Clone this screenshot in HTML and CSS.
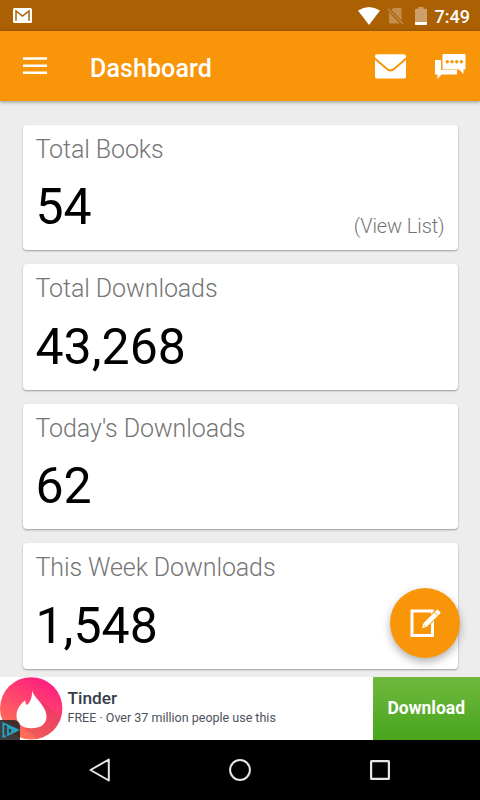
FILE: index.html
```html
<!DOCTYPE html>
<html lang="en">
<head>
    <meta charset="UTF-8">
    <meta name="viewport" content="width=device-width, initial-scale=1.0">
    <title>Dashboard</title>
    <link rel="stylesheet" href="styles.css">
</head>
<body>
    <div class="status-bar">
        <svg class="gmail" width="19" height="15" viewBox="0 0 19 15">
            <rect width="19" height="15" rx="1.5" fill="#fff"/>
            <path d="M3 12.8V3l6.5 5L16 3v9.8" fill="none" stroke="#ab6103" stroke-width="1.5"/>
        </svg>
        <svg class="wifi" width="22" height="18" viewBox="0 0 22 18">
            <path d="M0 3.6Q11-3.6 22 3.6L11 18z" fill="#fff"/>
        </svg>
        <svg class="no-sim" width="17" height="18" viewBox="0 0 17 18">
            <path d="M6 1h7.500q1 0 1 1v11.600L4.500 3zM2 5.200L12.800 16.500H3.500Q2 16.500 2 15z" fill="#c48e4e"/>
            <path d="M.6 1.600L16 17" stroke="#c48e4e" stroke-width="1.200"/>
        </svg>
        <svg class="battery" width="12" height="18" viewBox="0 0 12 18">
            <path d="M3.500 0h5v1.800H11q1 0 1 1V15H0V2.800q0-1 1-1h2.500z" fill="#cda069"/>
            <path d="M0 15h12v2.200q0 .8-.8.800H.8q-.8 0-.8-.8z" fill="#fff"/>
        </svg>
        <span class="clock">7:49</span>
    </div>

    <header>
        <svg class="menu" width="24" height="18" viewBox="0 0 24 18">
            <path d="M0 1.500h24M0 8.800h24M0 15.800h24" stroke="#fff" stroke-width="2.600"/>
        </svg>
        <h1>Dashboard</h1>
        <svg class="mail" width="31" height="25" viewBox="0 0 31 25">
            <rect y=".3" width="31" height="24.300" rx="2" fill="#fff"/>
            <path d="M-.5 4.200L12 14.900q3.500 3 7 0L31.500 4.200" fill="none" stroke="#f99508" stroke-width="2"/>
        </svg>
        <svg class="chat" width="31" height="25" viewBox="0 0 31 25">
            <path d="M0 6h6v10h16v4.500H6.500L2.500 25v-4.500H0z" fill="#fff"/>
            <path d="M7.500 0H30.500v15.500h-2V20L24 15.500H7.500z" fill="#fff"/>
            <g fill="#f99508">
                <circle cx="12.300" cy="7.700" r="1.700"/>
                <circle cx="17" cy="7.700" r="1.700"/>
                <circle cx="21.700" cy="7.700" r="1.700"/>
                <circle cx="26.400" cy="7.700" r="1.700"/>
            </g>
        </svg>
    </header>

    <main>
        <section class="card">
            <h2>Total Books</h2>
            <p class="number">54</p>
            <a class="view-list">(View List)</a>
        </section>
        <section class="card">
            <h2>Total Downloads</h2>
            <p class="number">43,268</p>
        </section>
        <section class="card">
            <h2>Today's Downloads</h2>
            <p class="number">62</p>
        </section>
        <section class="card">
            <h2>This Week Downloads</h2>
            <p class="number">1,548</p>
        </section>

        <button class="fab" type="button" aria-label="Edit">
            <svg width="31" height="30" viewBox="0 0 31 30">
                <rect x="2" y="3" width="20.500" height="24.500" fill="none" stroke="#fff" stroke-width="3"/>
                <path d="M12 20.200l1.600-5.200L26.800 1.900q.7-.6 1.400.1l2 2q.7.700 0 1.400L17 18.400z" fill="#fff" stroke="#f99508" stroke-width="2" paint-order="stroke"/>
                <path d="M24.500 4.200l3.300 3.300M14 17l1.200 1.200" stroke="#f99508" stroke-width=".9"/>
            </svg>
        </button>
    </main>

    <div class="ad">
        <div class="ad-logo">
            <svg width="63" height="63" viewBox="0 0 63 63">
                <defs>
                    <linearGradient id="pink" x1=".75" y1=".05" x2=".25" y2=".95">
                        <stop offset="0" stop-color="#ff1e80"/>
                        <stop offset="1" stop-color="#ff7456"/>
                    </linearGradient>
                    <clipPath id="round"><circle cx="31.200" cy="31.400" r="31.200"/></clipPath>
                </defs>
                <circle cx="31.200" cy="31.400" r="31.200" fill="url(#pink)"/>
                <path d="M44 25L63 43V63H38L20 47z" fill="#a83240" opacity=".2" clip-path="url(#round)"/>
                <path d="M32 12.500c.5 5.500 6 9.500 10 15.500 2.500 3.600 4.500 7.200 4.500 11.500 0 8-6.500 11.800-15.200 11.800S16.500 46.500 16.500 39c0-6.500 3.500-12 8.800-15.800-.1 2 .3 3.800 1.500 4.900 4-3.300 5.700-9 5.200-15.600z" fill="#fff"/>
            </svg>
            <span class="ad-choices">
                <svg width="17" height="16" viewBox="0 0 17 16">
                    <path d="M4 14l-2.700.8V1.400L15.800 8 6 12.800V5l6 3-3 1.500" fill="none" stroke="#20a5c5" stroke-width="1.800"/>
                </svg>
            </span>
        </div>
        <div class="ad-text">
            <h3>Tinder</h3>
            <p>FREE · Over 37 million people use this</p>
        </div>
        <button class="download" type="button">Download</button>
    </div>

    <nav>
        <svg width="24" height="26" viewBox="0 0 24 26">
            <path d="M20.800 2.500v21L2.500 13z" fill="none" stroke="#e6e6e6" stroke-width="2" stroke-linejoin="round"/>
        </svg>
        <svg width="24" height="24" viewBox="0 0 24 24">
            <circle cx="12" cy="12" r="9.900" fill="none" stroke="#e6e6e6" stroke-width="2"/>
        </svg>
        <svg width="24" height="24" viewBox="0 0 24 24">
            <rect x="3.100" y="3.100" width="17.800" height="17.800" rx=".5" fill="none" stroke="#e6e6e6" stroke-width="2.200"/>
        </svg>
    </nav>
</body>
</html>
```
FILE: styles.css
```css
/* General */
* {
    box-sizing: border-box;
}

body {
    display: flex;
    flex-direction: column;
    width: 480px;
    height: 800px;
    margin: 0;
    overflow: hidden;
    font-family: Roboto, sans-serif;
    background-color: #ededed;
}

h1, h2, h3, p {
    margin: 0;
}

svg {
    display: block;
    flex: none;
}

button {
    border: none;
    padding: 0;
    font-family: inherit;
}

/* Status bar */
.status-bar {
    display: flex;
    align-items: center;
    height: 31px;
    padding: 0 10px 0 13px;
    background-color: #ab6103;
    color: #fff;
}

.wifi {
    margin-left: auto;
}

.no-sim {
    margin-left: 7px;
}

.battery {
    margin-left: 11px;
}

.clock {
    margin-left: 8px;
    font-size: 18px;
    font-weight: 500;
    line-height: 31px;
    padding-top: 1px;
}

/* Toolbar */
header {
    position: relative;
    display: flex;
    align-items: center;
    height: 70px;
    padding: 0 14px 0 23px;
    background-color: #f99508;
    color: #fff;
    box-shadow: 0 1px 4px rgba(0, 0, 0, 0.4);
}

h1 {
    margin-left: 43px;
    padding-top: 4px;
    font-size: 25px;
    font-weight: 500;
    letter-spacing: 0.1px;
}

.mail {
    margin-left: auto;
}

.chat {
    margin-left: 29px;
}

/* Cards */
main {
    position: relative;
    display: flex;
    flex-direction: column;
    gap: 14px;
    height: 576px;
    padding: 23.7px 22.5px 0;
}

.card {
    display: grid;
    grid-template-columns: 1fr auto;
    grid-template-rows: 50.7px 1fr;
    flex: none;
    height: 125.5px;
    padding: 0 13px;
    background-color: #fff;
    border-radius: 4px;
    box-shadow: 0 1px 2px rgba(0, 0, 0, 0.35);
}

.card h2 {
    grid-column: 1 / 3;
    font-size: 25px;
    font-weight: 300;
    line-height: 50px;
    letter-spacing: -0.1px;
    color: #757575;
}

.number {
    font-size: 50px;
    line-height: 64px;
    color: #000;
}

.view-list {
    align-self: end;
    padding-bottom: 12px;
    font-size: 20px;
    font-weight: 300;
    line-height: 24px;
    letter-spacing: -0.1px;
    color: #757575;
}

/* Floating edit button */
.fab {
    position: absolute;
    right: 20px;
    bottom: 19.5px;
    display: flex;
    align-items: center;
    justify-content: center;
    width: 70px;
    height: 70px;
    border-radius: 50%;
    background-color: #f99508;
    box-shadow: 0 4px 8px rgba(0, 0, 0, 0.3);
}

/* Ad banner */
.ad {
    display: flex;
    height: 63px;
    background-color: #fff;
}

.ad-logo {
    position: relative;
    width: 63px;
}

.ad-choices {
    position: absolute;
    left: 0;
    bottom: 0;
    display: flex;
    align-items: center;
    justify-content: center;
    width: 20px;
    height: 20px;
    border-top-right-radius: 6px;
    background-color: rgba(45, 40, 40, 0.9);
}

.ad-text {
    flex: 1;
    padding: 10px 0 0 4.5px;
    color: #353d49;
}

.ad-text h3 {
    font-size: 17.3px;
    font-weight: 500;
    line-height: 22px;
}

.ad-text p {
    font-size: 12.5px;
    line-height: 18px;
    color: #4c525c;
}

.download {
    width: 107.5px;
    padding-bottom: 2px;
    background: linear-gradient(#70b93f, #48a51d);
    color: #fff;
    font-size: 17.5px;
    font-weight: 700;
}

/* Navigation bar */
nav {
    display: flex;
    align-items: center;
    justify-content: center;
    gap: 116px;
    height: 60px;
    background-color: #000;
}
```
